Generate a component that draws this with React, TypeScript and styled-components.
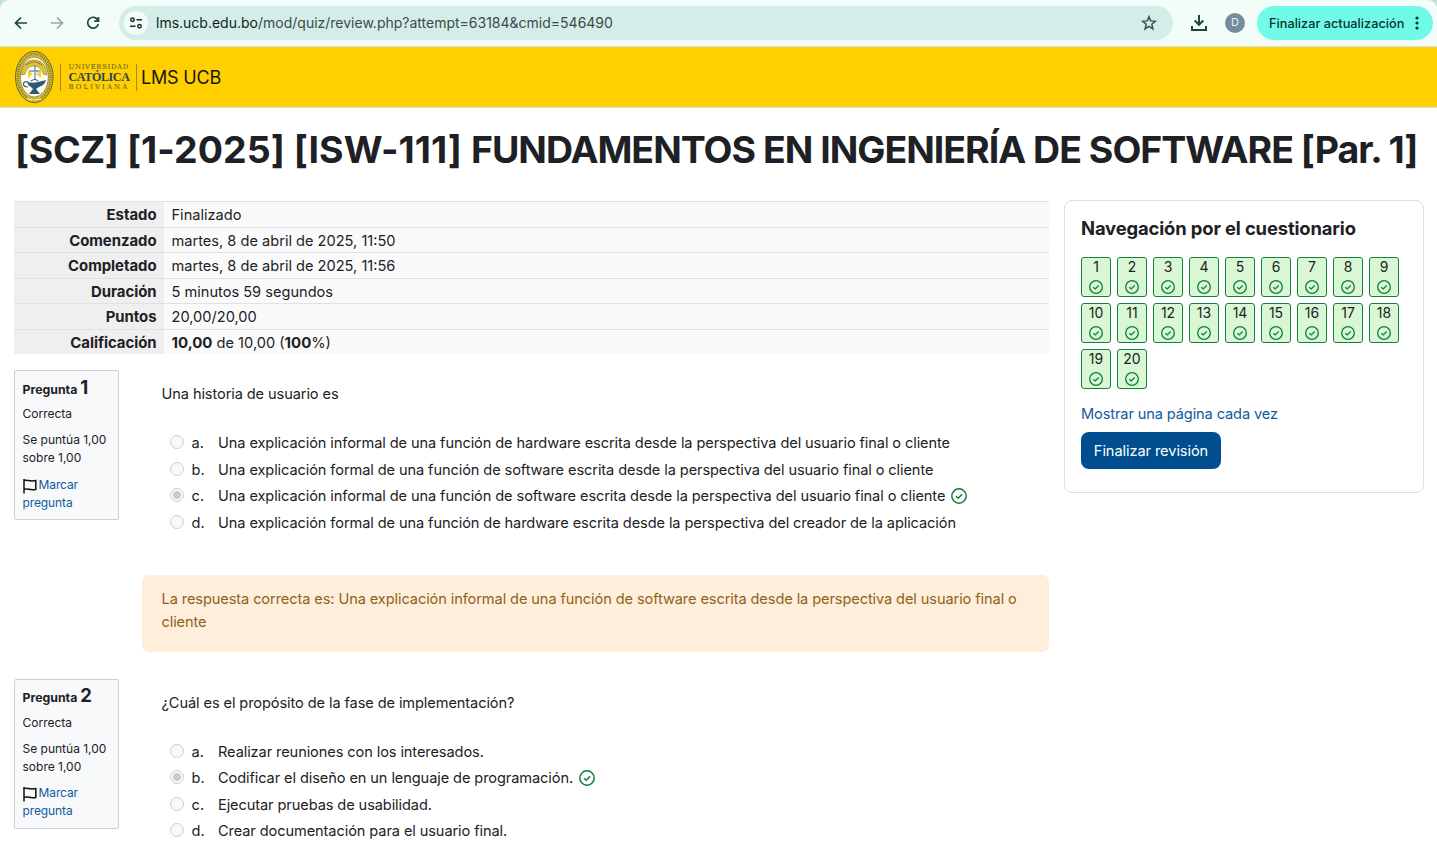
import React from 'react';
import styled, { createGlobalStyle, css } from 'styled-components';

const Global = createGlobalStyle`
  *, *::before, *::after { box-sizing: border-box; }
  html, body { margin: 0; height: 852px; overflow: hidden; }
  body { font-family: Inter, "Liberation Sans", sans-serif; font-size: 14.6px; line-height: 22.5px; color: #1d2125; background: #fff; }
  p, h1, h2, h3 { margin: 0; }
`;

const Screen = styled.div`width: 1437px; height: 852px; overflow: hidden; background: #fff;`;

/* Browser toolbar */
const Corners = styled.div`background: #bfe6de;`;
const Toolbar = styled.header`
  display: flex; align-items: center; height: 47px; padding: 0 4px 1px 10px;
  background: #f2fcf9; border-bottom: 1px solid #dbe7e4; border-radius: 9px 9px 0 0;
`;
const NavIcons = styled.div`display: flex; align-items: center; gap: 14px; width: 109px; color: #1f4540;`;
const AddressBar = styled.div`
  display: flex; align-items: center; width: 1054px; height: 34px; padding: 0 15px 0 5px;
  border-radius: 17px; background: #d5ede8;
`;
const SiteInfo = styled.span`
  display: flex; align-items: center; justify-content: center; width: 24px; height: 24px;
  border-radius: 50%; background: #f2fcf9; margin-right: 8px;
`;
const Url = styled.span`flex: 1; padding-top: 1px; font-size: 14px; color: #3b4b48; b { font-weight: 400; color: #0d1f1c; }`;
const Avatar = styled.span`
  display: flex; align-items: center; justify-content: center; width: 20px; height: 20px; margin-left: 4px;
  border-radius: 50%; background: #748d9b; color: #e8f0f2; font-size: 11px; line-height: 1;
`;
const Update = styled.button`
  display: flex; align-items: center; justify-content: space-between; width: 176px; height: 34px;
  padding: 1px 13px 0 12px; border: 0; border-radius: 17px; background: #70fae8;
  font: 500 12.75px Inter, sans-serif; color: #0b3530; white-space: nowrap;
`;
const Actions = styled.div`display: flex; align-items: center; flex: 1; justify-content: space-between; padding-left: 16px;`;

/* Site header */
const SiteHeader = styled.div`
  display: flex; align-items: center; height: 61px; padding-left: 14px;
  background: #ffcf00; border-bottom: 1px solid #dee2e6;
`;
const Wordmark = styled.div`
  display: flex; flex-direction: column; height: 27px; margin-left: 6px; padding: 0 0 0 7.5px;
  border-left: 1px solid #a18d27; border-right: 1px solid #a18d27;
  font-family: "DejaVu Serif", serif; color: #4e5a33; width: 77px;
`;
const MarkLine = styled.span<{ $size: number; $gap: number; $bold?: boolean; $h: number }>`
  font-size: ${p => p.$size}px; letter-spacing: ${p => p.$gap}px; height: ${p => p.$h}px; line-height: ${p => p.$h}px;
  white-space: nowrap; font-weight: ${p => (p.$bold ? 700 : 400)}; ${p => p.$bold && css`color: #2c4450; font-family: "Liberation Serif", serif;`}
`;
const SiteName = styled.span`margin-left: 4px; padding-top: 2px; font-size: 18px; letter-spacing: -0.2px; color: #16160c;`;

const Title = styled.h1`
  height: 92px; padding: 19px 0 0 15px; font-size: 37.5px; line-height: 46px; font-weight: 700;
  letter-spacing: -0.4px; white-space: nowrap;
`;
const Tracked = styled.span<{ $gap: number }>`letter-spacing: ${p => p.$gap}px;`;
const Columns = styled.div`display: flex; align-items: flex-start; gap: 15px; padding-left: 14px;`;
const Main = styled.main`width: 1035px; padding-top: 1px;`;

const Summary = styled.table`width: 100%; border-collapse: collapse; margin-bottom: 16.5px;`;
const SummaryRow = styled.tr`height: 25.5px; border-top: 1px solid #dee2e6; &:last-child { height: 24.5px; }`;
const Label = styled.th`
  width: 150px; padding: 2px 7.5px 0; text-align: right; font-size: 14.9px; font-weight: 700; letter-spacing: -0.03px;
  background: #efefef; line-height: 22px;
`;
const Value = styled.td`padding: 2px 8px 0 7.5px; background: #fafafa; line-height: 22px; b { font-weight: 700; font-size: 15px; }`;

const Question = styled.section<{ $h: number }>`display: flex; align-items: flex-start; justify-content: space-between; height: ${p => p.$h}px;`;
const Info = styled.aside`
  width: 105px; height: 150px; padding: 6.6px 7.5px; border: 1px solid #cad0d7; border-radius: 2px; background: #f8f9fa;
  font-size: 12px; line-height: 18px;
`;
const Number = styled.h3`font-size: 12.3px; line-height: 20px; height: 20px; font-weight: 700; white-space: nowrap; span { font-size: 18.5px; line-height: 18px; }`;
const InfoText = styled.p<{ $top: number }>`margin-top: ${p => p.$top}px; white-space: nowrap;`;
const FlagLink = styled.a`color: #0f5b9d; letter-spacing: -0.1px; svg { vertical-align: -5px; margin-right: 2px; }`;
const Content = styled.div`width: 907px; letter-spacing: -0.1px;`;
const Formulation = styled.div`height: 205px; padding: 13px 19.5px 0;`;
const Answers = styled.div`margin-top: 24.6px; padding-left: 8.5px;`;
const Answer = styled.div`display: flex; align-items: center; height: 26.5px; white-space: nowrap; svg { margin: -1px 0 0 1.5px; }`;
const Radio = styled.span<{ $on?: boolean }>`
  width: 14px; height: 14px; border: 1px solid #cfcfcf; border-radius: 50%; margin: -2px 7.5px 0 0;
  background: ${p => (p.$on ? 'radial-gradient(circle, #cbcbcb 0 3.6px, #f8f8f8 4.3px)' : '#f8f8f8')};
`;
const Letter = styled.span`width: 26.5px; letter-spacing: 0.1px;`;
const Feedback = styled.div`
  height: 77px; padding: 13px 19.5px; border-radius: 7px; background: #feeedb; color: #8f6318; line-height: 23px;
`;

const NavCard = styled.aside`width: 360px; height: 293px; padding: 15px 16px; border: 1px solid #dfe0e1; border-radius: 8px;`;
const CardTitle = styled.h2`font-size: 18.4px; line-height: 24px; font-weight: 700; letter-spacing: -0.13px;`;
const Grid = styled.div`display: grid; grid-template-columns: repeat(9, 30px); gap: 6px; margin-top: 17px;`;
const Cell = styled.a`
  display: flex; flex-direction: column; align-items: center; height: 40px; border: 1px solid #15803a; border-radius: 3px;
  background: #d9f7d4; font-size: 14px; line-height: 18px;
  svg { margin-top: 4px; }
`;
const PageLink = styled.a`display: block; margin-top: 14px; color: #0f5b9d; letter-spacing: -0.12px;`;
const Finish = styled.button`
  width: 140px; height: 37px; margin-top: 6px; border: 0; border-radius: 8px; background: #004e8f; color: #fff;
  font: 400 14.6px Inter, sans-serif; letter-spacing: -0.08px; padding: 2px 0 0; white-space: nowrap;
`;

const Check = ({ size }: { size: number }) => (
  <svg width={size} height={size} viewBox="0 0 16 16" fill="none" stroke="#0d7f35" strokeWidth="1.5">
    <circle cx="8" cy="8" r="7.200" /><path d="M5 8.2l2.1 2 4-3.8" />
  </svg>
);

const Flag = () => (
  <svg width="14" height="16" viewBox="0 0 14 16" fill="none" stroke="#111" strokeWidth="1.5">
    <path d="M1 1v14.5M1 2.5c3-1.3 5 1.300 11.800.1v8.800c-6 1.200-8-1.400-11.800 0" />
  </svg>
);

const Seal = () => (
  <svg width="40" height="54" viewBox="0 0 40 54">
    <ellipse cx="20.300" cy="27" rx="18.800" ry="25.600" fill="#e3c02a" stroke="#63682f" strokeWidth="1" />
    <ellipse cx="20.300" cy="27" rx="16.400" ry="23" fill="none" stroke="#7f7f36" strokeWidth="2.600" strokeDasharray="1.200 1.100" />
    <ellipse cx="20.300" cy="27" rx="14" ry="20" fill="#fffdf2" stroke="#76753a" strokeWidth=".8" />
    <path d="M7.500 25c0-9 5-15 12.500-15s12.500 6 12.500 15l-3.500-1c-1-5-4-8-9-8s-8 3-9 8z" fill="#e4c22d" stroke="#8d883c" strokeWidth=".7" />
    <path d="M12 15q8-6 16 0" fill="none" stroke="#7c7a3c" strokeWidth="1.500" strokeDasharray="1.200 .8" />
    <path d="M14 19l4.500 5-4.500 5zM27 19l-5 5 5 4z" fill="#f3cf45" />
    <path d="M21 15v15M15.500 21h10" stroke="#6f94b0" strokeWidth="1.400" />
    <path d="M13 32c4 1 8 1 11 0l8-2c-1 4-4 6-7 7l-3 2 4 5H15l4-5-2-2c-2-1-3-2-4-5z" fill="#31567a" />
    <path d="M14 37c-6 0-6-7 0-5M17 31q4-3 7 0" fill="none" stroke="#31567a" strokeWidth="1.200" />
    <path d="M13 48.500q7 3 14 0" fill="none" stroke="#fff3a0" strokeWidth="1.200" />
  </svg>
);

const stroke = { fill: 'none', stroke: 'currentColor', strokeWidth: 1.7 };

const summary: [string, React.ReactNode][] = [
  ['Estado', 'Finalizado'],
  ['Comenzado', 'martes, 8 de abril de 2025, 11:50'],
  ['Completado', 'martes, 8 de abril de 2025, 11:56'],
  ['Duración', '5 minutos 59 segundos'],
  ['Puntos', '20,00/20,00'],
  ['Calificación', <><b>10,00</b> de 10,00 (<b>100</b>%)</>],
];

const questions = [
  {
    text: 'Una historia de usuario es', correct: 2, height: 308.6,
    answers: [
      'Una explicación informal de una función de hardware escrita desde la perspectiva del usuario final o cliente',
      'Una explicación formal de una función de software escrita desde la perspectiva del usuario final o cliente',
      'Una explicación informal de una función de software escrita desde la perspectiva del usuario final o cliente',
      'Una explicación formal de una función de hardware escrita desde la perspectiva del creador de la aplicación',
    ],
    feedback: 'La respuesta correcta es: Una explicación informal de una función de software escrita desde la perspectiva del usuario final o cliente',
  },
  {
    text: '¿Cuál es el propósito de la fase de implementación?', correct: 1, height: 173,
    answers: [
      'Realizar reuniones con los interesados.',
      'Codificar el diseño en un lenguaje de programación.',
      'Ejecutar pruebas de usabilidad.',
      'Crear documentación para el usuario final.',
    ],
  },
];

export default function App() {
  return (
    <Screen>
      <Global />
      <Corners>
        <Toolbar>
          <NavIcons>
            <svg width="22" height="22" viewBox="0 0 22 22" {...stroke}><path d="M17 11H6M11 5.5L5.5 11l5.500 5.500" /></svg>
            <svg width="22" height="22" viewBox="0 0 22 22" {...stroke} opacity=".45"><path d="M5 11h11M11 5.500l5.500 5.500-5.500 5.500" /></svg>
            <svg width="22" height="22" viewBox="0 0 22 22" {...stroke}><path d="M16 8.500A5.400 5.400 0 1 0 16.300 12M16.500 5v4.200h-4.200" /></svg>
          </NavIcons>
          <AddressBar>
            <SiteInfo>
              <svg width="14" height="14" viewBox="0 0 14 14" fill="none" stroke="#1c2f2c" strokeWidth="1.5">
                <circle cx="3.500" cy="3.700" r="1.700" /><path d="M7.500 3.700H13M1 10.300h5.500" /><circle cx="10.500" cy="10.300" r="1.700" />
              </svg>
            </SiteInfo>
            <Url><b>lms.ucb.edu.bo</b>/mod/quiz/review.php?attempt=63184&amp;cmid=546490</Url>
            <svg width="18" height="18" viewBox="0 0 18 18" fill="none" stroke="#35504b" strokeWidth="1.5">
              <path d="M9 2.700l1.700 4.200 4.600.4-3.500 3 1.100 4.500L9 12.400l-3.900 2.400 1.100-4.500-3.500-3 4.600-.4z" />
            </svg>
          </AddressBar>
          <Actions>
            <svg width="20" height="20" viewBox="0 0 20 20" fill="none" stroke="#1f4540" strokeWidth="2">
              <path d="M10 2v9M5.700 7.500l4.300 4.300 4.300-4.300M3 13v4h14v-4" />
            </svg>
            <Avatar>D</Avatar>
            <Update>
              Finalizar actualización
              <svg width="6" height="16" viewBox="0 0 6 16" fill="#0b3530"><circle cx="3" cy="3" r="1.600" /><circle cx="3" cy="8" r="1.600" /><circle cx="3" cy="13" r="1.600" /></svg>
            </Update>
          </Actions>
        </Toolbar>
      </Corners>
      <SiteHeader>
        <Seal />
        <Wordmark>
          <MarkLine $size={6.9} $gap={0.65} $h={6}>UNIVERSIDAD</MarkLine>
          <MarkLine $size={12} $gap={-0.35} $h={14} $bold>CATÓLICA</MarkLine>
          <MarkLine $size={6.9} $gap={2.1} $h={7}>BOLIVIANA</MarkLine>
        </Wordmark>
        <SiteName>LMS UCB</SiteName>
      </SiteHeader>
      <Title>
        [SCZ] <Tracked $gap={0.02}>[1-2025] [ISW-111] </Tracked>
        <Tracked $gap={-1}>FUNDAMENTOS EN INGENIERÍA DE SOFTWARE [Par. 1]</Tracked>
      </Title>
      <Columns>
        <Main>
          <Summary>
            <tbody>
              {summary.map(([k, v]) => (
                <SummaryRow key={k}><Label>{k}</Label><Value>{v}</Value></SummaryRow>
              ))}
            </tbody>
          </Summary>
          {questions.map((q, n) => (
            <Question key={q.text} $h={q.height}>
              <Info>
                <Number>Pregunta <span>{n + 1}</span></Number>
                <InfoText $top={7.4}>Correcta</InfoText>
                <InfoText $top={8}>Se puntúa 1,00<br />sobre 1,00</InfoText>
                <InfoText $top={8.6}><FlagLink><Flag />Marcar<br />pregunta</FlagLink></InfoText>
              </Info>
              <Content>
                <Formulation>
                  <p>{q.text}</p>
                  <Answers>
                    {q.answers.map((a, i) => (
                      <Answer key={a}>
                        <Radio $on={i === q.correct} />
                        <Letter>{'abcd'[i]}.</Letter>
                        {a}
                        {i === q.correct && <>&nbsp;<Check size={16} /></>}
                      </Answer>
                    ))}
                  </Answers>
                </Formulation>
                {q.feedback && <Feedback>{q.feedback}</Feedback>}
              </Content>
            </Question>
          ))}
        </Main>
        <NavCard>
          <CardTitle>Navegación por el cuestionario</CardTitle>
          <Grid>
            {Array.from({ length: 20 }, (_, i) => (
              <Cell key={i}>{i + 1}<Check size={14} /></Cell>
            ))}
          </Grid>
          <PageLink>Mostrar una página cada vez</PageLink>
          <Finish>Finalizar revisión</Finish>
        </NavCard>
      </Columns>
    </Screen>
  );
}
